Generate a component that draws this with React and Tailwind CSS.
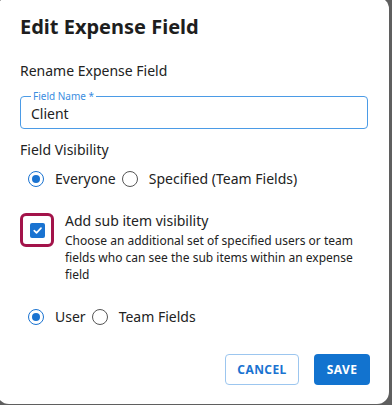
import React, { useState } from "react";

function Radio({ checked, label, onClick }) {
  return (
    <label className="flex items-center gap-[11px] cursor-pointer" onClick={onClick}>
      <span
        className={`w-[16px] h-[16px] rounded-full border-[1.5px] flex items-center justify-center ${
          checked ? "border-[#1a73d1]" : "border-[#555]"
        }`}
      >
        {checked && <span className="w-[8px] h-[8px] rounded-full bg-[#1a73d1]" />}
      </span>
      <span className="text-[14px] text-[#222]">{label}</span>
    </label>
  );
}

export default function App() {
  const [visibility, setVisibility] = useState("everyone");
  const [sub, setSub] = useState("user");
  const [name, setName] = useState("Client");
  const [subOn, setSubOn] = useState(true);

  return (
    <div className="w-[392px] h-[405px] overflow-hidden bg-[#5f5f5f]" style={{ fontFamily: '"Noto Sans", "Open Sans", sans-serif' }}>
      <div className="-mt-[3px] -ml-[3px] w-[392px] h-[407px] rounded-[12px] bg-white pl-[23px] pr-[21px] pt-[17px]">
        <h1 className="text-[20px] font-bold text-[#1e1e1e] leading-[26px]">Edit Expense Field</h1>

        <p className="mt-[21px] text-[14px] text-[#222] leading-[20px]">Rename Expense Field</p>

        <fieldset className="mt-[10px] h-[38px] rounded-[4px] border border-[#4b9be6] px-[10px]">
          <legend className="px-[2px] text-[10px] leading-[10px] text-[#3a8ddf]">Field Name *</legend>
          <input
            value={name}
            onChange={(e) => setName(e.target.value)}
            className="w-full -mt-[2px] text-[14px] leading-[22px] text-[#222] outline-none bg-transparent"
          />
        </fieldset>

        <p className="mt-[11px] text-[14px] text-[#222] leading-[20px]">Field Visibility</p>

        <div className="mt-[8px] ml-[8px] flex items-center gap-[6px]">
          <Radio checked={visibility === "everyone"} label="Everyone" onClick={() => setVisibility("everyone")} />
          <Radio checked={visibility === "specified"} label="Specified (Team Fields)" onClick={() => setVisibility("specified")} />
        </div>

        <div className="mt-[24px] flex gap-[11px]">
          <div className="w-[34px] h-[34px] shrink-0 rounded-[6px] border-[3px] border-[#a3134a] flex items-center justify-center">
            <button
              onClick={() => setSubOn(!subOn)}
              className={`w-[15px] h-[15px] rounded-[2px] flex items-center justify-center ${subOn ? "bg-[#1a73d1]" : "border border-[#555]"}`}
            >
              {subOn && (
                <svg width="11" height="11" viewBox="0 0 10 10" fill="none">
                  <path d="M2 5.2 L4.1 7.2 L8.2 2.9" stroke="white" strokeWidth="1.5" strokeLinecap="round" strokeLinejoin="round" />
                </svg>
              )}
            </button>
          </div>
          <div className="text-[#222] -mt-[2px] w-[305px]">
            <p className="text-[14px] leading-[20px]">Add sub item visibility</p>
            <p className="text-[12px] leading-[17px] mt-[1px]">
              Choose an additional set of specified users or team fields who can see the sub items within an expense field
            </p>
          </div>
        </div>

        <div className="mt-[23px] ml-[8px] flex items-center gap-[6px]">
          <Radio checked={sub === "user"} label="User" onClick={() => setSub("user")} />
          <Radio checked={sub === "team"} label="Team Fields" onClick={() => setSub("team")} />
        </div>

        <div className="mt-[27px] flex justify-end gap-[15px] -mr-[2px]">
          <button className="h-[31px] w-[74px] rounded-[4px] border border-[#9cc6ef] text-[12px] font-bold tracking-[0.4px] text-[#1a73d1]">
            CANCEL
          </button>
          <button className="h-[31px] w-[56px] rounded-[4px] bg-[#1273cf] text-[12px] font-bold tracking-[0.4px] text-white">
            SAVE
          </button>
        </div>
      </div>
    </div>
  );
}
